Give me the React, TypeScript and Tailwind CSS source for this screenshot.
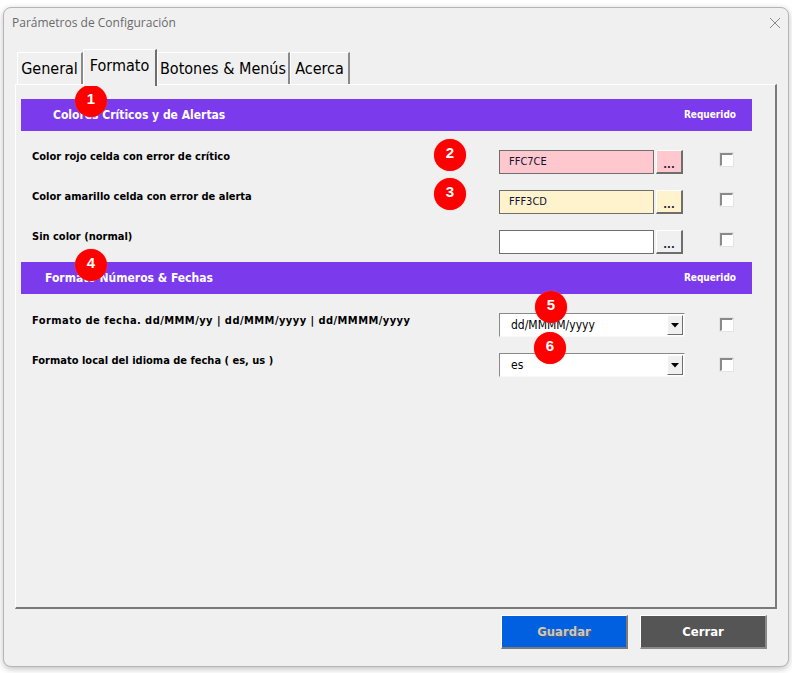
import React from 'react';

const tahoma = "font-['Tahoma','DejaVu_Sans_Condensed','DejaVu_Sans',sans-serif]";

type ColorRow = {
    label: string;
    value: string;
    bg: string;
};

const colorRows: ColorRow[] = [
    { label: 'Color rojo celda con error de crítico', value: 'FFC7CE', bg: 'bg-[#ffc7ce]' },
    { label: 'Color amarillo celda con error de alerta', value: 'FFF3CD', bg: 'bg-[#fff3cd]' },
    { label: 'Sin color (normal)', value: '', bg: 'bg-white' },
];

const Checkbox = ({ className }: { className?: string }) => (
    <div
        className={`w-[13px] h-[13px] bg-white border-t-[2px] border-l-[2px] border-t-[#8a8a8a] border-l-[#8a8a8a] border-b border-r border-b-white border-r-white shadow-[0_0_0_1px_#e4e4e4] ${className ?? ''}`}
    />
);

const Header = ({ title, indent }: { title: string; indent: string }) => (
    <div className={`w-[731px] h-[32px] bg-[#7c3aed] flex items-center justify-between ${indent} pr-[16px] pb-[1px] ${tahoma} font-bold text-white`}>
        <span className="text-[12px]">{title}</span>
        <span className="text-[10px]">Requerido</span>
    </div>
);

const Badge = ({ n, x, y }: { n: number; x: string; y: string }) => (
    <div
        className={`absolute ${x} ${y} w-[32px] h-[32px] rounded-full bg-[#ff0000] flex items-center justify-center text-white font-bold text-[15px] pb-[3px] font-['Liberation_Sans',sans-serif] shadow-[0_0_1px_#ff6060]`}
    >
        {n}
    </div>
);

const Combo = ({ value }: { value: string }) => (
    <div className="w-[186px] h-[24px] flex bg-white border-t border-l border-t-[#8a8a8a] border-l-[#8a8a8a] border-b border-r border-b-[#f8f8f8] border-r-[#f8f8f8] p-[1px]">
        <div className={`flex-1 pl-[10px] pt-[1px] text-[12px] text-black ${tahoma}`}>{value}</div>
        <div className="w-[16px] h-[20px] bg-[#f0f0f0] border-t border-l border-white border-b border-r border-b-[#6e6e6e] border-r-[#6e6e6e] flex items-center justify-center">
            <svg width="8" height="5" viewBox="0 0 8 5">
                <path d="M0 0h8L4 4.5z" fill="#000" />
            </svg>
        </div>
    </div>
);

const tabs = [
    { name: 'General', w: 'w-[66px]' },
    { name: 'Formato', w: 'w-[74px]', active: true },
    { name: 'Botones & Menús', w: 'w-[133px]' },
    { name: 'Acerca', w: 'w-[60px]' },
];

export default function App() {
    return (
        <div className="relative w-[792px] h-[673px] bg-white pt-[7px] pl-[3px] overflow-hidden">
            <div className="w-[786px] h-[660px] bg-[#f0f0f0] border border-[#b5b5b5] rounded-[8px] shadow-[0_2px_6px_rgba(0,0,0,0.25)] flex flex-col">
                {/* title bar */}
                <div className="h-[30px] flex items-center justify-between pl-[8px] pr-[7px] font-['Open_Sans','Noto_Sans',sans-serif] text-[12px] text-[#6a6a6a]">
                    <span>Parámetros de Configuración</span>
                    <svg width="12" height="12" viewBox="0 0 12 12">
                        <path d="M1 1l10 10M11 1L1 11" stroke="#8a8a8a" strokeWidth="1" />
                    </svg>
                </div>

                {/* tabs */}
                <div className="mt-[11px] ml-[13px] h-[35px] flex items-end relative z-10">
                    {tabs.map((t) =>
                        t.active ? (
                            <div
                                key={t.name}
                                className={`${t.w} h-[37px] -mb-[2px] bg-[#f0f0f0] border-t border-l border-white border-r-2 border-r-[#6e6e6e] flex justify-center pt-[4px] text-[16px] text-black ${tahoma}`}
                            >
                                {t.name}
                            </div>
                        ) : (
                            <div
                                key={t.name}
                                className={`${t.w} h-[32px] bg-[#f0f0f0] border-t border-l border-white border-r-2 border-r-[#8a8a8a] flex justify-center pt-[4px] text-[16px] text-black ${tahoma}`}
                            >
                                {t.name}
                            </div>
                        )
                    )}
                </div>

                {/* tab page */}
                <div className="ml-[11px] w-[762px] h-[525px] border-t border-l border-white border-r-2 border-b-2 border-r-[#7a7a7a] border-b-[#7a7a7a] pt-[14px] pl-[5px]">
                    <Header title="Colores Críticos y de Alertas" indent="pl-[32px]" />

                    <div className="mt-[19px] flex flex-col">
                        {colorRows.map((r, i) => (
                            <div key={r.label} className={`flex items-start pl-[11px] ${i < 2 ? 'h-[40px]' : 'h-[32px]'}`}>
                                <div className={`w-[467px] leading-[14px] text-[11px] font-bold text-black ${tahoma}`}>{r.label}</div>
                                <div
                                    className={`w-[155px] h-[24px] ${r.bg} border border-[#6e6e6e] pl-[9px] pt-[3px] text-[11px] text-[#111133] ${tahoma}`}
                                >
                                    {r.value}
                                </div>
                                <div
                                    className={`ml-[2px] w-[27px] h-[24px] ${i < 2 ? r.bg : 'bg-[#f0f0f0]'} border-t border-l border-white border-b-2 border-r-2 border-b-[#6e6e6e] border-r-[#6e6e6e] flex items-end justify-center pb-[2px] text-[11px] font-bold leading-[11px] text-[#202040] ${tahoma}`}
                                >
                                    ...
                                </div>
                                <Checkbox className="ml-[37px] mt-[3px]" />
                            </div>
                        ))}
                    </div>

                    <Header title="Formato Números & Fechas" indent="pl-[24px]" />

                    <div className="mt-[19px] flex flex-col">
                        {[
                            { label: 'Formato de fecha. dd/MMM/yy | dd/MMM/yyyy | dd/MMMM/yyyy', value: 'dd/MMMM/yyyy', track: 'tracking-[0.45px]' },
                            { label: 'Formato local del idioma de fecha ( es, us )', value: 'es', track: '' },
                        ].map((r) => (
                            <div key={r.label} className="flex items-start pl-[11px] h-[40px]">
                                <div className={`w-[467px] leading-[14px] pt-[1px] text-[11px] font-bold text-black ${r.track} ${tahoma}`}>{r.label}</div>
                                <Combo value={r.value} />
                                <Checkbox className="ml-[35px] mt-[5px]" />
                            </div>
                        ))}
                    </div>
                </div>

                {/* footer buttons */}
                <div className="mt-[6px] flex justify-end gap-[12px] pr-[21px]">
                    <button
                        className={`w-[127px] h-[34px] bg-[#0060df] border-t border-l border-white border-b-2 border-r-2 border-b-[#7a7a7a] border-r-[#7a7a7a] text-[13px] font-bold text-[#c9c9c9] [text-shadow:1px_1px_0_#5a5a5a] ${tahoma}`}
                    >
                        Guardar
                    </button>
                    <button
                        className={`w-[127px] h-[34px] bg-[#555555] border-t border-l border-white border-b-2 border-r-2 border-b-[#8a8a8a] border-r-[#8a8a8a] text-[13px] font-bold text-white ${tahoma}`}
                    >
                        Cerrar
                    </button>
                </div>
            </div>

            <Badge n={1} x="left-[75px]" y="top-[85px]" />
            <Badge n={2} x="left-[434px]" y="top-[139px]" />
            <Badge n={3} x="left-[434px]" y="top-[178px]" />
            <Badge n={4} x="left-[75px]" y="top-[249px]" />
            <Badge n={5} x="left-[535px]" y="top-[291px]" />
            <Badge n={6} x="left-[534px]" y="top-[332px]" />
        </div>
    );
}
